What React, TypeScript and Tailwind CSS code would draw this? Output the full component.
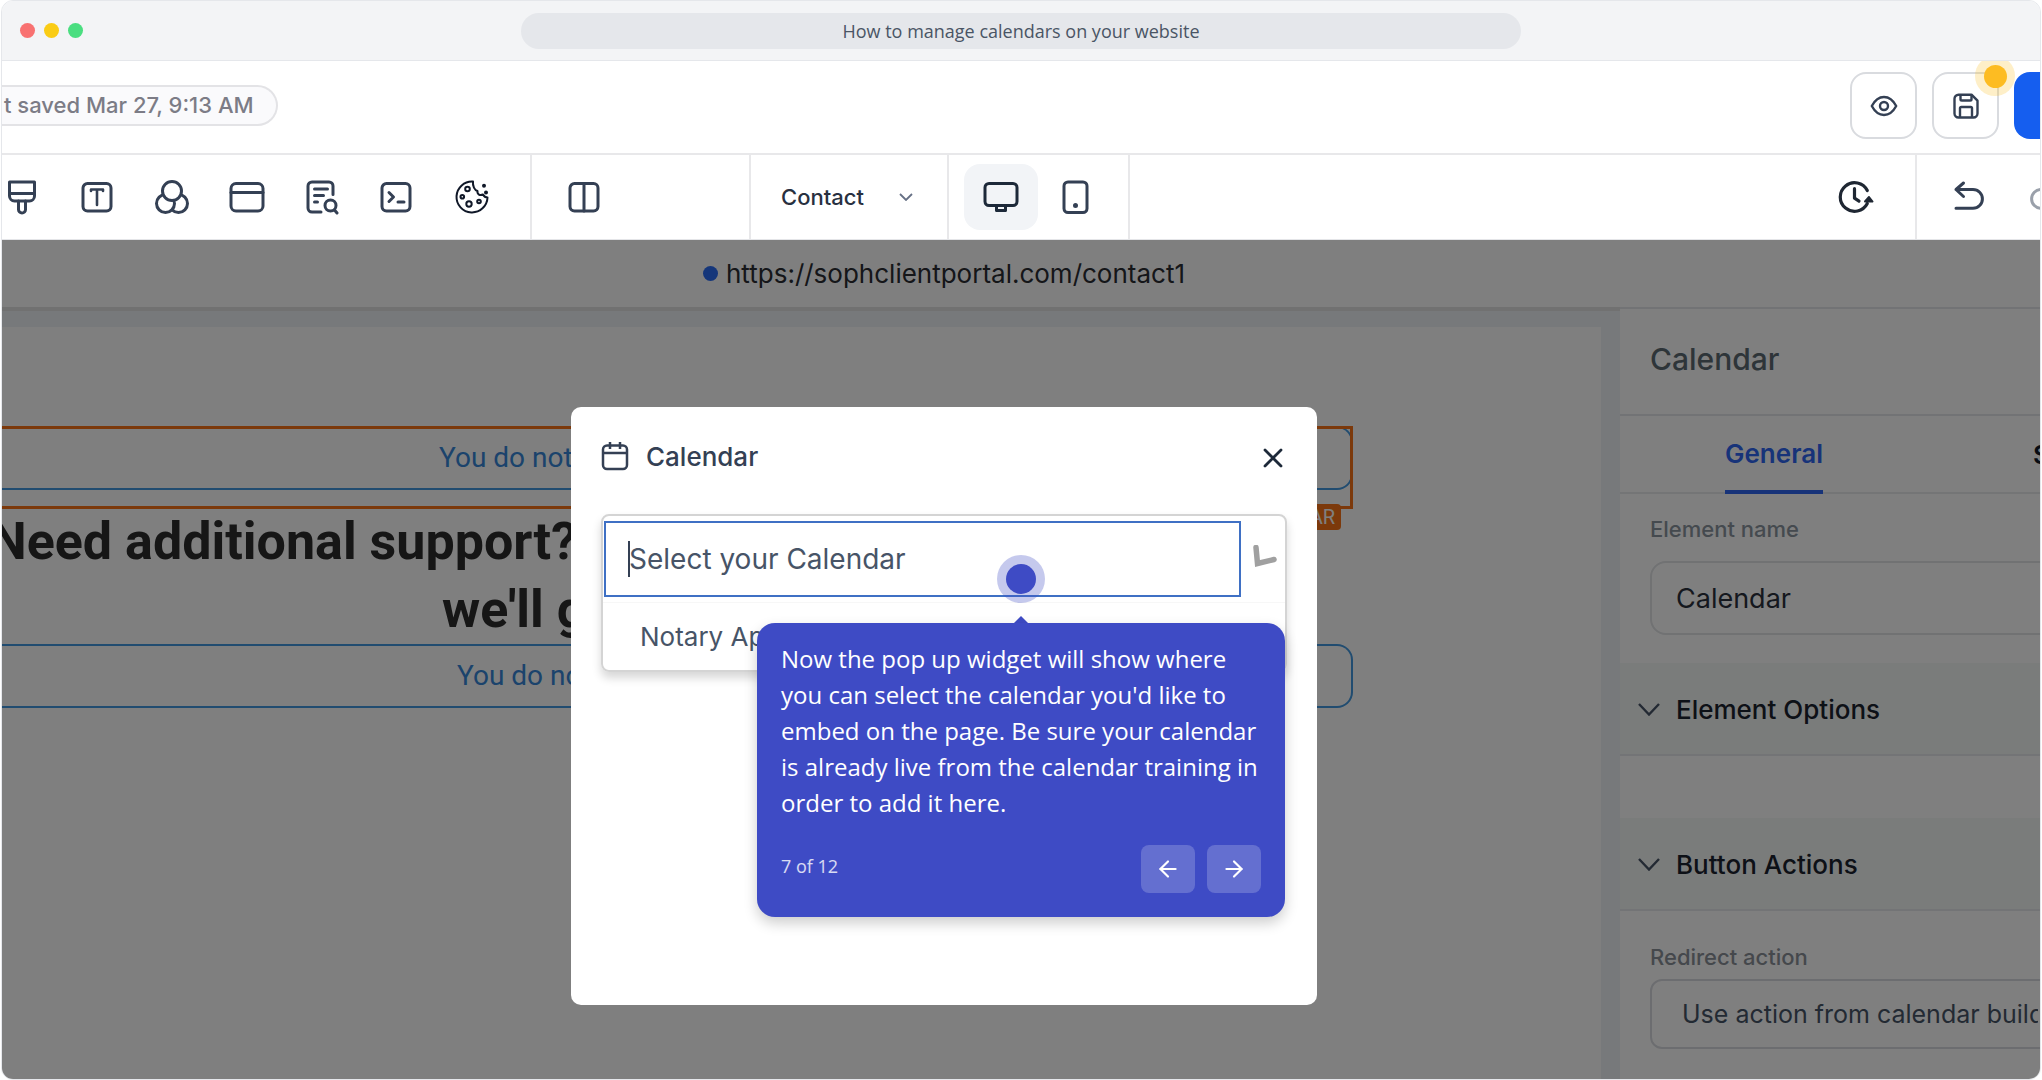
import type { ReactNode } from "react";
import { ArrowLeft, ArrowRight } from "lucide-react";

type IconProps = { children: ReactNode; className?: string; stroke?: number };

function Icon({ children, className = "", stroke = 3 }: IconProps) {
  return (
    <svg
      viewBox="0 0 36 36"
      fill="none"
      stroke="currentColor"
      strokeWidth={stroke}
      strokeLinecap="round"
      strokeLinejoin="round"
      aria-hidden="true"
      className={`size-9 shrink-0 ${className}`}
    >
      {children}
    </svg>
  );
}

const tools = [
  {
    label: "Styles",
    icon: (
      <Icon>
        <path d="M5.5 3h25v14a5 5 0 0 1-5 5h-15a5 5 0 0 1-5-5z" />
        <path d="M5.5 14.5h25M14.5 22v8.5a3.5 3.5 0 0 0 7 0V22" />
      </Icon>
    ),
  },
  {
    label: "Typography",
    icon: (
      <Icon>
        <rect x="4" y="4.5" width="28" height="27.5" rx="4.5" />
        <path d="M12 12v-1.5h12V12M18 10.5v15.5" strokeWidth={2.6} />
      </Icon>
    ),
  },
  {
    label: "Colors",
    icon: (
      <Icon>
        <circle cx="24.5" cy="24.5" r="9" />
        <circle cx="11.5" cy="24.5" r="9" fill="white" />
        <circle cx="18" cy="12" r="9.5" fill="white" />
      </Icon>
    ),
  },
  {
    label: "Popups",
    icon: (
      <Icon>
        <rect x="2" y="4.5" width="32" height="27.5" rx="5" />
        <path d="M2 13.5h32" />
      </Icon>
    ),
  },
  {
    label: "SEO",
    icon: (
      <Icon>
        <path d="M29 15.5V7a4 4 0 0 0-4-4H8a4 4 0 0 0-4 4v22a4 4 0 0 0 4 4h9" />
        <path d="M10.5 10h13M10.5 16.5h9M10.5 23h3" />
        <circle cx="26.5" cy="26.5" r="5.5" />
        <path d="M30.5 31l2.5 3" />
      </Icon>
    ),
  },
  {
    label: "Custom code",
    icon: (
      <Icon>
        <rect x="3" y="4.5" width="28" height="27.5" rx="4.5" />
        <path d="M10 13.5l4.5 4.5-4.5 4.5M19 23h6" />
      </Icon>
    ),
  },
  {
    label: "Cookies",
    icon: (
      <Icon stroke={2} className="text-gray-900">
        <path d="M19 2.5A15.5 15.5 0 1 0 33.5 18.5c-2.5 0-3.5-1-4.5-3-3 1.5-6 0-5.500-3.500-3-1-5-5-4.500-9.500z" />
        <circle cx="13.5" cy="10" r="2.3" />
        <circle cx="8.3" cy="17.7" r="1.8" />
        <circle cx="15" cy="25" r="2.7" />
        <circle cx="25" cy="22.5" r="1.8" />
        <circle cx="30" cy="6.7" r="1" fill="currentColor" />
        <circle cx="32" cy="13.5" r="1" fill="currentColor" />
      </Icon>
    ),
  },
];

function TitleBar() {
  return (
    <div className="grid h-[60px] shrink-0 grid-cols-[1fr_1000px_1fr] items-center border-b border-gray-200 bg-gray-100">
      <div className="flex gap-[9px] pl-[18px]">
        <span className="size-[15px] rounded-full bg-[#f87171]" />
        <span className="size-[15px] rounded-full bg-[#facc15]" />
        <span className="size-[15px] rounded-full bg-[#4ade80]" />
      </div>
      <div className="flex h-9 items-center justify-center rounded-full bg-gray-200 font-['Open_Sans',sans-serif] text-lg text-gray-600">
        How to manage calendars on your website
      </div>
    </div>
  );
}

function Header() {
  return (
    <header className="flex h-[94px] shrink-0 items-start justify-between overflow-hidden border-b-2 border-[#e8e8ea]">
      <p className="mt-6 flex h-[41px] items-center rounded-r-full border-2 border-l-0 border-[#e3e3e6] bg-[#fafafc] pr-[22px] pl-[2px] text-[22px] font-medium text-[#7c7c86]">
        t saved Mar 27, 9:13 AM
      </p>
      <div className="mt-[11px] flex gap-[15px] text-[#344054]">
        <button
          aria-label="Preview"
          className="flex size-[67px] items-center justify-center rounded-2xl border-2 border-[#d9dbdf]"
        >
          <svg viewBox="0 0 28 28" fill="none" stroke="currentColor" strokeWidth="2.4" className="size-7">
            <path d="M1.8 14C5 8 9 5 14 5s9 3 12.2 9C23 20 19 23 14 23S5 20 1.8 14z" strokeLinejoin="round" />
            <circle cx="14" cy="14" r="4" />
          </svg>
        </button>
        <button
          aria-label="Save"
          className="relative flex size-[67px] items-center justify-center rounded-2xl border-2 border-[#d9dbdf]"
        >
          <svg
            viewBox="0 0 28 28"
            fill="none"
            stroke="currentColor"
            strokeWidth="2.4"
            strokeLinejoin="round"
            className="size-7"
          >
            <path d="M6.5 2.7h13l6 6v12.800a4 4 0 0 1-4 4h-15a4 4 0 0 1-4-4V6.700a4 4 0 0 1 4-4z" />
            <path d="M8.5 2.7v4.500c0 .8.500 1.300 1.300 1.300h8.400c.8 0 1.300-.5 1.300-1.300V2.700M8 25.500v-9.200c0-.8.500-1.300 1.300-1.300h9.400c.8 0 1.300.5 1.300 1.300v9.200" />
          </svg>
          <span className="absolute -top-[18px] -right-[18px] flex size-10 items-center justify-center rounded-full bg-[#fbbf24]/25">
            <span className="size-[23px] rounded-full bg-[#fdbc22]" />
          </span>
        </button>
        <button aria-label="Publish" className="h-[67px] w-[26px] rounded-l-2xl bg-[#155eef]" />
      </div>
    </header>
  );
}

function Toolbar() {
  return (
    <div className="flex h-[85px] shrink-0 items-stretch overflow-hidden border-b border-[#e4e5e8] text-[#344054]">
      <div className="flex items-center gap-[39px] border-r-2 border-[#e8e8ea] pr-[40px] pl-[2px]">
        {tools.map((tool) => (
          <button key={tool.label} aria-label={tool.label}>
            {tool.icon}
          </button>
        ))}
      </div>
      <div className="flex w-[219px] items-center border-r-2 border-[#e8e8ea] pl-[34px]">
        <button aria-label="Layout">
          <Icon>
            <rect x="4" y="4.5" width="28" height="27.5" rx="4.5" />
            <path d="M18 4.5V32" />
          </Icon>
        </button>
      </div>
      <div className="flex w-[198px] items-center border-r-2 border-[#e8e8ea] pl-[30px]">
        <select
          aria-label="Page"
          className="w-[118px] appearance-none bg-transparent text-[22px] font-medium text-[#28303f] outline-none"
        >
          <option>Contact</option>
        </select>
        <svg viewBox="0 0 14 8" fill="none" stroke="#667085" strokeWidth="1.8" className="h-2 w-3.5">
          <path d="M1 1l6 6 6-6" />
        </svg>
      </div>
      <div className="flex w-[181px] items-center gap-5 border-r-2 border-[#e8e8ea] pl-[15px]">
        <button
          aria-label="Desktop"
          className="flex h-[66px] w-[74px] items-center justify-center rounded-2xl bg-[#f2f4f7] text-[#1d2939]"
        >
          <Icon>
            <rect x="2" y="4.5" width="32" height="22" rx="4" />
            <path d="M13.5 27v4.5h9V27" />
          </Icon>
        </button>
        <button aria-label="Mobile">
          <Icon>
            <rect x="6" y="3" width="23" height="30.5" rx="4" />
            <circle cx="17.5" cy="26.5" r="1" fill="currentColor" />
          </Icon>
        </button>
      </div>
      <div className="flex flex-1 items-center justify-end border-r-2 border-[#e8e8ea] pr-[41px]">
        <button aria-label="Version history">
          <Icon stroke={3.2} className="text-[#1f2733]">
            <path d="M29.3 11.5A14.3 14.3 0 1 0 29.3 24.5" />
            <path d="M16.5 9.7v9.500l4.500 3" />
            <path d="M27 22.5l4-4.500 3.500 4.500z" fill="currentColor" strokeWidth={2} />
          </Icon>
        </button>
      </div>
      <div className="flex w-[123px] shrink-0 items-center gap-[40px] overflow-hidden pl-[34px]">
        <button aria-label="Undo">
          <Icon>
            <path d="M12.5 4L5 10.500l7.500 7M5 10.500h17a9.400 9.400 0 0 1 0 18.800H5" />
          </Icon>
        </button>
        <button aria-label="Redo">
          <Icon className="text-[#9aa0aa]">
            <path d="M23.5 4l7.500 6.500-7.500 7M31 10.500H14a9.400 9.400 0 0 0 0 18.800h17" />
          </Icon>
        </button>
      </div>
    </div>
  );
}

function Canvas() {
  return (
    <main className="min-w-0 flex-1 border-t-4 border-[#e2e2e3] bg-[#eff2f7] pt-4 pr-[19px]">
      <div className="h-full overflow-hidden bg-white pt-[99px] pr-[248px] font-[Roboto,sans-serif] whitespace-nowrap">
        <section className="relative h-[83px]">
          <p className="flex h-16 items-center rounded-r-2xl border-2 border-l-0 border-[#4299e1] pl-[437px] text-[28px] text-[#3686d8]">
            You do not
          </p>
          <span className="absolute inset-0 border-y-[3px] border-r-[3px] border-[#f97316]" />
          <span className="absolute top-[78px] right-3 rounded bg-[#f97316] px-1.5 text-xl leading-[26px] text-white">
            CALENDAR
          </span>
        </section>
        <h1 className="-ml-[12px] -mt-px text-[52px] leading-[68px] font-bold text-[#2d2d2d]">
          Need additional support?
          <span className="block pl-[452px]">we'll g</span>
        </h1>
        <p className="flex h-16 items-center rounded-r-2xl border-2 border-l-0 border-[#4299e1] pl-[455px] text-[28px] text-[#3686d8]">
          You do no
        </p>
      </div>
    </main>
  );
}

function SectionTitle({ children }: { children: ReactNode }) {
  return (
    <button className="flex h-[93px] w-full items-center gap-4 border-b-2 border-[#e7e9ec] bg-[#f5f8f7] pt-[2px] pl-[18px] text-[26px] font-medium text-[#1a222e]">
      <svg viewBox="0 0 22 13" fill="none" stroke="#475467" strokeWidth="2.4" className="h-[13px] w-[22px]">
        <path d="M1 1l10 10.500L21 1" />
      </svg>
      {children}
    </button>
  );
}

function SettingsPanel() {
  return (
    <aside className="w-[420px] shrink-0 overflow-hidden border-t-2 border-[#e5e7eb] bg-white">
      <h2 className="flex h-[107px] items-center border-b-2 border-[#e5e7eb] pb-1 pl-[30px] text-[30px] font-medium text-[#5c6a72]">
        Calendar
      </h2>
      <div className="flex h-[78px] gap-[210px] border-b-2 border-[#e8eaed] pl-[105px] text-[26px] font-semibold">
        <button className="-mb-[2px] border-b-4 border-[#2f66f3] text-[#2f66f3]">General</button>
        <button className="text-gray-900">Styles</button>
      </div>
      <div className="w-[480px] px-[30px] pt-[22px] pb-7">
        <label htmlFor="element-name" className="block text-[22px] leading-[26px] font-medium text-[#8a949e]">
          Element name
        </label>
        <input
          id="element-name"
          defaultValue="Calendar"
          className="mt-[19px] block h-[74px] w-full rounded-2xl border-2 border-[#e2e4e7] px-6 text-[27px] text-[#2a303c] outline-none"
        />
      </div>
      <SectionTitle>Element Options</SectionTitle>
      <div className="h-[62px]" />
      <SectionTitle>Button Actions</SectionTitle>
      <div className="w-[480px] px-[30px] pt-[33px]">
        <label htmlFor="redirect-action" className="block text-[22px] leading-[26px] font-medium text-[#8a9099]">
          Redirect action
        </label>
        <select
          id="redirect-action"
          className="mt-[9px] block h-[70px] w-full appearance-none rounded-xl border-2 border-[#d9dbe0] bg-transparent px-[30px] pt-[2px] text-[25px] text-[#475467] outline-none"
        >
          <option>Use action from calendar builder</option>
        </select>
      </div>
    </aside>
  );
}

function CalendarDialog() {
  return (
    <div
      role="dialog"
      aria-label="Calendar"
      className="h-[598px] w-[746px] rounded-[10px] bg-white px-[30px] pt-[29px] text-[#344054]"
    >
      <div className="flex h-10 items-center">
        <svg viewBox="0 0 28 30" fill="none" stroke="currentColor" strokeWidth="2.5" className="mr-[17px] h-[30px] w-7">
          <rect x="2" y="4.5" width="24" height="23.5" rx="4" />
          <path d="M2 12h24M9 1v7M19 1v7" />
        </svg>
        <h2 className="text-[26px] font-medium">Calendar</h2>
        <button aria-label="Close" className="mt-1 mr-1 ml-auto text-[#1d2939]">
          <svg viewBox="0 0 20 20" stroke="currentColor" strokeWidth="2.8" strokeLinecap="round" className="size-5">
            <path d="M2 2l16 16M18 2L2 18" />
          </svg>
        </button>
      </div>
      <div className="mt-[38px] rounded-lg border-2 border-[#d4d4d4] shadow-[0_6px_10px_rgba(0,0,0,0.16)]">
        <div className="flex h-[87px] items-center border-b border-[#f7f7f7] pl-px">
          <div className="relative w-[637px]">
            <input
              aria-label="Select your Calendar"
              placeholder="Select your Calendar"
              className="h-[76px] w-full border-2 border-[#3f70c4] px-[23px] text-[28px] outline-none placeholder:text-[#475467] placeholder:opacity-100"
            />
            <span className="absolute top-5 left-6 h-9 w-[2px] bg-[#344054]" />
          </div>
          <svg viewBox="0 0 24 24" fill="none" stroke="#a0a0a0" strokeWidth="5.5" className="mb-1 ml-3 size-6">
            <path d="M3 2.5l1.500 16 16.500-4" strokeLinecap="round" strokeLinejoin="miter" />
          </svg>
        </div>
        <ul className="text-[26px] text-[#475467]">
          <li className="flex h-[67px] items-center pl-[37px]">Notary Ap</li>
        </ul>
      </div>
    </div>
  );
}

function GuideStep() {
  return (
    <div className="absolute top-[315px] left-1/2 flex -translate-x-1/2 flex-col items-center font-['Open_Sans',sans-serif]">
      <span className="flex size-12 items-center justify-center rounded-full bg-[#3e4bc5]/30">
        <span className="size-[30px] rounded-full bg-[#3e4bc5]" />
      </span>
      <svg viewBox="0 0 14 7" fill="#3e4bc5" className="mt-[13px] h-[7px] w-3.5">
        <path d="M7 0l7 7H0z" />
      </svg>
      <div className="w-[528px] rounded-[18px] bg-[#3e4bc5] px-6 pt-[18px] pb-6 text-white shadow-[0_6px_14px_rgba(0,0,0,0.2)]">
        <p className="text-2xl leading-9">
          Now the pop up widget will show where you can select the calendar you'd like to embed on the page. Be sure
          your calendar is already live from the calendar training in order to add it here.
        </p>
        <div className="mt-6 flex gap-3">
          <span className="mr-auto pt-[7px] text-lg text-white/80">7 of 12</span>
          <button aria-label="Previous" className="flex h-12 w-[54px] items-center justify-center rounded-lg bg-white/20">
            <ArrowLeft size={26} />
          </button>
          <button aria-label="Next" className="flex h-12 w-[54px] items-center justify-center rounded-lg bg-white/20">
            <ArrowRight size={26} />
          </button>
        </div>
      </div>
    </div>
  );
}

export default function App() {
  return (
    <div className="min-h-screen bg-white px-px font-[Inter,sans-serif]">
      <div className="flex min-h-screen flex-col overflow-hidden rounded-xl border border-gray-200">
        <TitleBar />
        <Header />
        <Toolbar />
        <div className="relative flex flex-1 flex-col">
          <div className="flex h-[67px] items-center justify-center gap-2 pr-[154px] text-[26px] text-[#2a2d33]">
            <span className="size-[15px] rounded-full bg-[#2b6df5]" />
            https://sophclientportal.com/contact1
          </div>
          <div className="flex flex-1">
            <Canvas />
            <SettingsPanel />
          </div>
          <div className="absolute inset-0 flex items-start justify-center bg-black/50 pt-[167px] pr-[154px]">
            <CalendarDialog />
          </div>
          <GuideStep />
        </div>
      </div>
    </div>
  );
}
